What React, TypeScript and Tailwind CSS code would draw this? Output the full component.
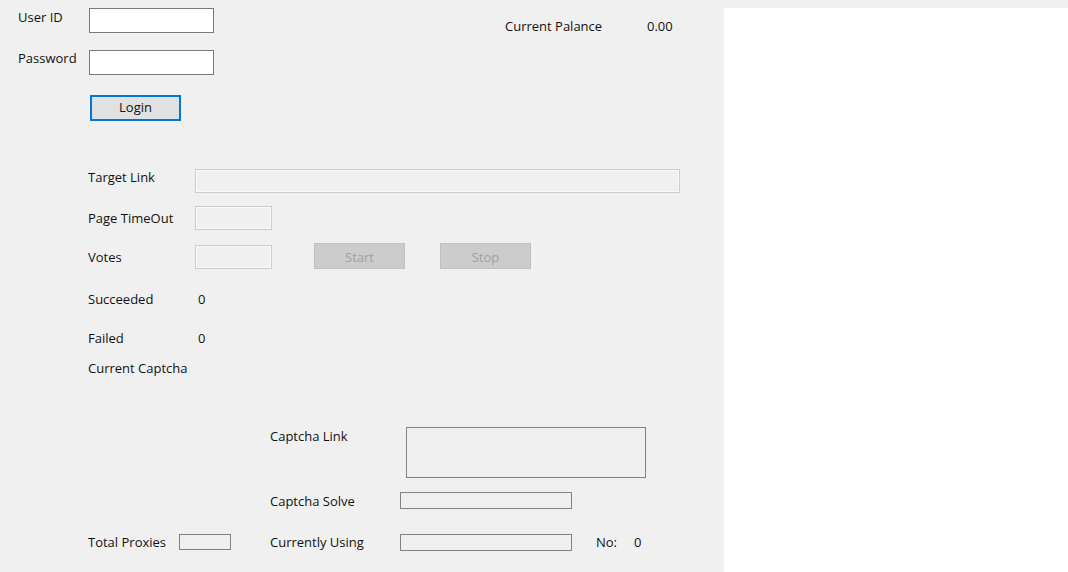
import React from "react";

const font = { fontFamily: '"Open Sans", "Noto Sans", sans-serif' };

function Label({ children, className = "" }: { children: React.ReactNode; className?: string }) {
  return (
    <span className={`block shrink-0 text-[13px] leading-[16px] text-[#111111] whitespace-nowrap ${className}`}>
      {children}
    </span>
  );
}

function TextBox({ className = "" }: { className?: string }) {
  return <div className={`shrink-0 border border-[#7a7a7a] bg-white ${className}`} />;
}

function DisabledBox({ className = "" }: { className?: string }) {
  return (
    <div
      className={`shrink-0 border border-[#cccccc] bg-[#f0f0f0] shadow-[inset_0_0_0_1px_#fafafa] ${className}`}
    />
  );
}

function DisabledButton({ label, className = "" }: { label: string; className?: string }) {
  return (
    <div
      className={`flex shrink-0 items-center justify-center border border-[#bfbfbf] bg-[#cccccc] pt-[3px] text-[13px] text-[#a0a0a0] ${className}`}
    >
      {label}
    </div>
  );
}

function FrameBox({ className = "" }: { className?: string }) {
  return <div className={`shrink-0 border border-[#828282] bg-[#f0f0f0] ${className}`} />;
}

export default function App() {
  return (
    <div className="flex h-[572px] w-[1068px] overflow-hidden bg-[#f0f0f0]" style={font}>
      {/* form area */}
      <div className="flex w-[724px] shrink-0 flex-col">
        {/* User ID + balance */}
        <div className="mt-[8px] flex h-[25px] items-start">
          <Label className="ml-[18px] mt-[1px] w-[71px]">User ID</Label>
          <TextBox className="h-[25px] w-[125px]" />
          <Label className="ml-[291px] mt-[10px] w-[142px]">Current Palance</Label>
          <Label className="mt-[10px]">0.00</Label>
        </div>

        {/* Password */}
        <div className="mt-[17px] flex h-[25px] items-start">
          <Label className="ml-[18px] w-[71px]">Password</Label>
          <TextBox className="h-[25px] w-[125px]" />
        </div>

        {/* Login */}
        <div className="mt-[20px] flex">
          <button className="ml-[90px] flex h-[26px] w-[91px] items-center justify-center border-2 border-[#0078d7] bg-[#e1e1e1] text-[13px] text-[#111111]">
            Login
          </button>
        </div>

        {/* Target link */}
        <div className="mt-[48px] flex h-[24px] items-start">
          <Label className="ml-[88px] w-[107px]">Target Link</Label>
          <DisabledBox className="h-[24px] w-[485px]" />
        </div>

        {/* Page timeout */}
        <div className="mt-[13px] flex h-[24px] items-start">
          <Label className="ml-[88px] mt-[4px] w-[107px]">Page TimeOut</Label>
          <DisabledBox className="h-[24px] w-[77px]" />
        </div>

        {/* Votes + start/stop */}
        <div className="mt-[13px] flex h-[26px] items-start">
          <Label className="ml-[88px] mt-[6px] w-[107px]">Votes</Label>
          <DisabledBox className="mt-[2px] h-[24px] w-[77px]" />
          <DisabledButton label="Start" className="ml-[42px] h-[26px] w-[91px]" />
          <DisabledButton label="Stop" className="ml-[35px] h-[26px] w-[91px]" />
        </div>

        {/* counters */}
        <div className="mt-[22px] flex">
          <Label className="ml-[88px] w-[110px]">Succeeded</Label>
          <Label>0</Label>
        </div>
        <div className="mt-[23px] flex">
          <Label className="ml-[88px] w-[110px]">Failed</Label>
          <Label>0</Label>
        </div>
        <div className="mt-[14px] flex">
          <Label className="ml-[88px]">Current Captcha</Label>
        </div>

        {/* captcha link */}
        <div className="mt-[51px] flex h-[51px] items-start">
          <Label className="ml-[270px] mt-[1px] w-[136px]">Captcha Link</Label>
          <FrameBox className="h-[51px] w-[240px]" />
        </div>

        {/* captcha solve */}
        <div className="mt-[14px] flex h-[17px] items-start">
          <Label className="ml-[270px] mt-[1px] w-[130px]">Captcha Solve</Label>
          <FrameBox className="h-[17px] w-[172px]" />
        </div>

        {/* proxies */}
        <div className="mt-[25px] flex h-[17px] items-start">
          <Label className="ml-[88px] w-[91px]">Total Proxies</Label>
          <FrameBox className="h-[16px] w-[52px]" />
          <Label className="ml-[39px] w-[130px]">Currently Using</Label>
          <FrameBox className="h-[17px] w-[172px]" />
          <Label className="ml-[24px] w-[38px]">No:</Label>
          <Label>0</Label>
        </div>
      </div>

      {/* white panel */}
      <div className="mt-[8px] flex-1 bg-white" />
    </div>
  );
}
